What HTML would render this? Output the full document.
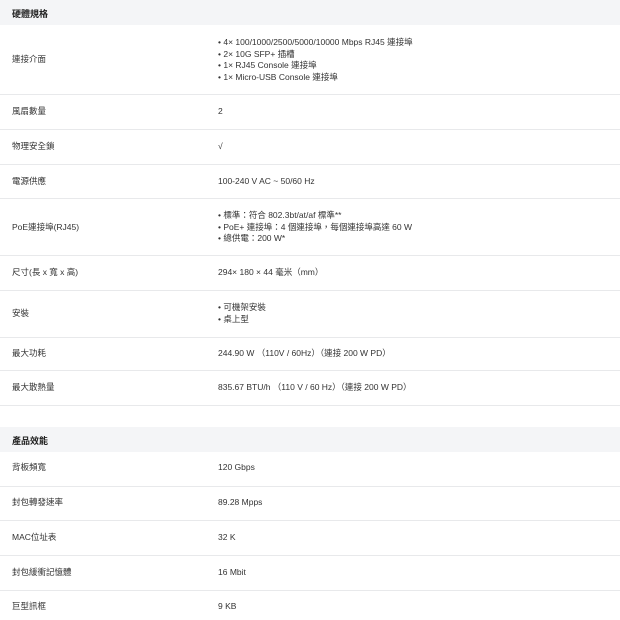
<!DOCTYPE html>
<html><head><meta charset="utf-8"><style>
body{margin:0;width:620px;height:620px;background:#fff;position:relative;overflow:hidden;font-family:"Liberation Sans","Noto Sans CJK TC",sans-serif;color:#333;font-size:8.5px}
.hd{position:absolute;left:0;width:620px;background:#f4f5f7;font-weight:bold;font-size:9px;color:#222}
.hd span{position:absolute;left:12px}
.ln{position:absolute;left:0;width:620px;height:1px;background:#e8e9eb}
.t{position:absolute;white-space:nowrap;line-height:11.5px}
.l{left:12px}.v{left:218px}
</style></head><body>
<div class="hd" style="top:0;height:25px"><span style="top:7px">硬體規格</span></div>
<div class="t l" style="top:54px">連接介面</div>
<div class="t v" style="top:37px">• 4× 100/1000/2500/5000/10000 Mbps RJ45 連接埠<br>• 2× 10G SFP+ 插槽<br>• 1× RJ45 Console 連接埠<br>• 1× Micro-USB Console 連接埠</div>
<div class="ln" style="top:94px"></div>
<div class="t l" style="top:106px">風扇數量</div><div class="t v" style="top:106px">2</div>
<div class="ln" style="top:129px"></div>
<div class="t l" style="top:141px">物理安全鎖</div><div class="t v" style="top:141px">√</div>
<div class="ln" style="top:164px"></div>
<div class="t l" style="top:176px">電源供應</div><div class="t v" style="top:176px">100-240 V AC ~ 50/60 Hz</div>
<div class="ln" style="top:198px"></div>
<div class="t l" style="top:222px">PoE連接埠(RJ45)</div>
<div class="t v" style="top:210px">• 標準：符合 802.3bt/at/af 標準**<br>• PoE+ 連接埠：4 個連接埠，每個連接埠高達 60 W<br>• 總供電：200 W*</div>
<div class="ln" style="top:255px"></div>
<div class="t l" style="top:267px">尺寸(長 x 寬 x 高)</div><div class="t v" style="top:267px">294× 180 × 44 毫米（mm）</div>
<div class="ln" style="top:290px"></div>
<div class="t l" style="top:308px">安裝</div>
<div class="t v" style="top:302px">• 可機架安裝<br>• 桌上型</div>
<div class="ln" style="top:337px"></div>
<div class="t l" style="top:348px">最大功耗</div><div class="t v" style="top:348px">244.90 W （110V / 60Hz）（連接 200 W PD）</div>
<div class="ln" style="top:370px"></div>
<div class="t l" style="top:382px">最大散熱量</div><div class="t v" style="top:382px">835.67 BTU/h （110 V / 60 Hz）（連接 200 W PD）</div>
<div class="ln" style="top:405px"></div>
<div class="hd" style="top:427px;height:25px"><span style="top:7px">產品效能</span></div>
<div class="t l" style="top:462px">背板頻寬</div><div class="t v" style="top:462px">120 Gbps</div>
<div class="ln" style="top:486px"></div>
<div class="t l" style="top:497px">封包轉發速率</div><div class="t v" style="top:497px">89.28 Mpps</div>
<div class="ln" style="top:520px"></div>
<div class="t l" style="top:532px">MAC位址表</div><div class="t v" style="top:532px">32 K</div>
<div class="ln" style="top:555px"></div>
<div class="t l" style="top:567px">封包緩衝記憶體</div><div class="t v" style="top:567px">16 Mbit</div>
<div class="ln" style="top:590px"></div>
<div class="t l" style="top:601px">巨型訊框</div><div class="t v" style="top:601px">9 KB</div>
</body></html>
